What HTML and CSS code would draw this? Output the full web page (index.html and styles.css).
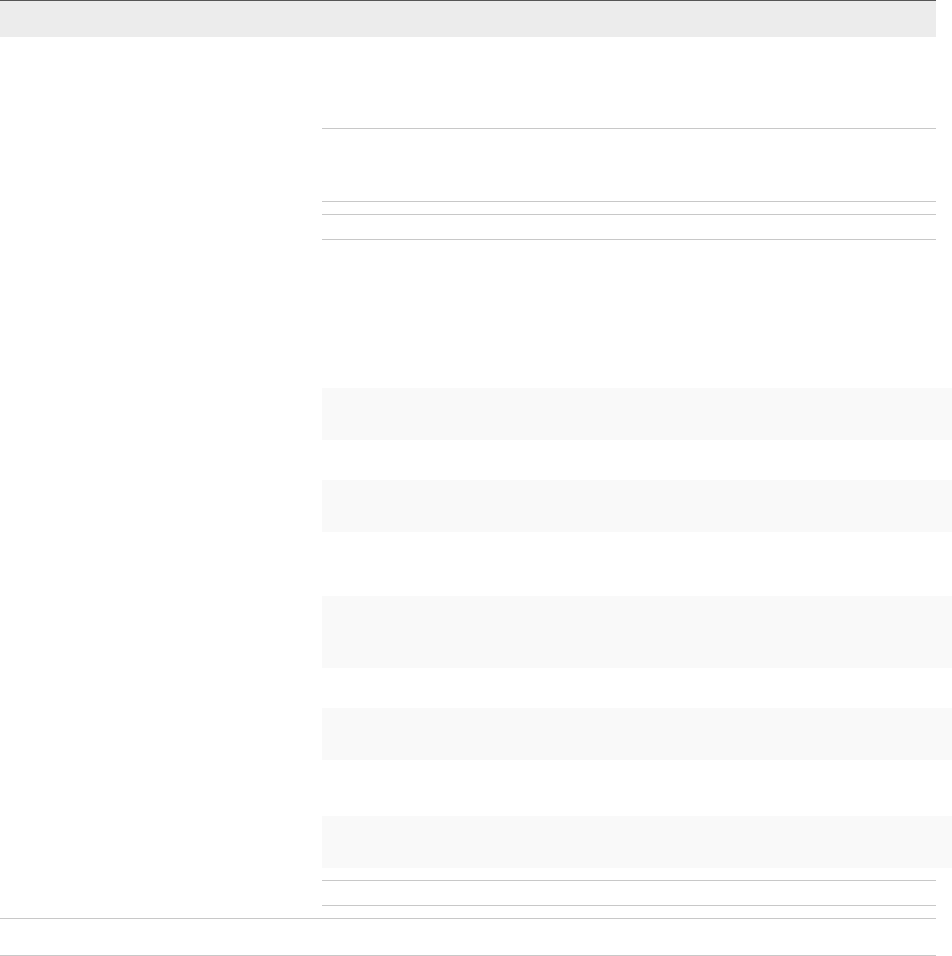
FILE: index.html
```html
<!DOCTYPE html>
<html lang="en">
<head>
<meta charset="utf-8">
<title>Table</title>
<link rel="stylesheet" href="styles.css">
</head>
<body>
<div class="table">
  <div class="thead"></div>
  <div class="row">
    <div class="cell-left"></div>
    <div class="cell-right">
      <div class="sub h91"></div>
      <div class="sub ruled h72"></div>
      <div class="sub ruled h12"></div>
      <div class="sub ruled h24"></div>
      <div class="sub ruled striped">
        <div class="gap h148"></div>
        <div class="band h52"></div>
        <div class="gap h40"></div>
        <div class="band h52"></div>
        <div class="gap h64"></div>
        <div class="band h72"></div>
        <div class="gap h40"></div>
        <div class="band h52"></div>
        <div class="gap h56"></div>
        <div class="band h52"></div>
        <div class="gap h12"></div>
      </div>
      <div class="sub ruled h24"></div>
      <div class="sub ruled h12"></div>
    </div>
  </div>
  <div class="row last"></div>
</div>
</body>
</html>
```

FILE: styles.css
```css
html, body {
  margin: 0;
  padding: 0;
  background: #ffffff;
  font-family: "Liberation Sans", Arial, sans-serif;
}

.table {
  width: 936px;
}

.thead {
  height: 36px;
  background: #ececec;
  border-top: 1px solid #565656;
}

.row {
  display: flex;
  border-bottom: 1px solid #c8c8c8;
}

.row.last {
  height: 36px;
}

.cell-left {
  width: 322px;
  flex: none;
}

.cell-right {
  flex: 1;
  display: flex;
  flex-direction: column;
}

.sub.ruled {
  border-top: 1px solid #c8c8c8;
}

.band {
  background: #f9f9f9;
  margin-right: -16px;
}

.h12 { height: 12px; }
.h24 { height: 24px; }
.h40 { height: 40px; }
.h52 { height: 52px; }
.h56 { height: 56px; }
.h64 { height: 64px; }
.h72 { height: 72px; }
.h91 { height: 91px; }
.h148 { height: 148px; }
```
